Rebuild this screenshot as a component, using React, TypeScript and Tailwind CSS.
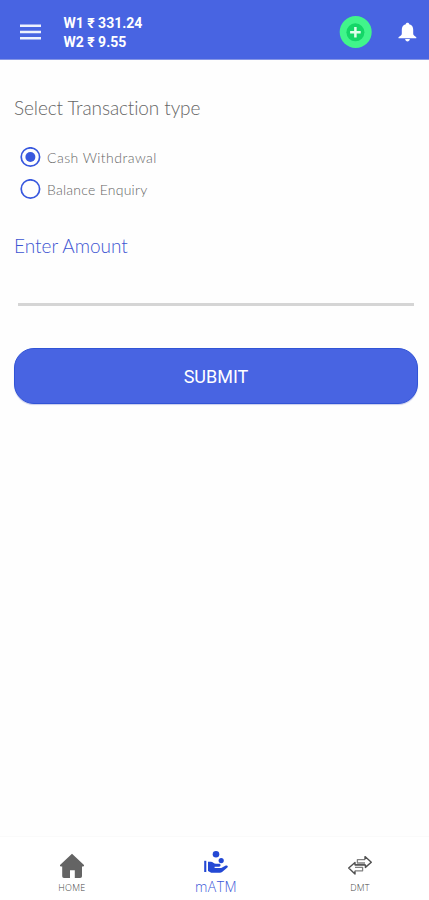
import React, { useState } from 'react';

interface RadioOptionProps {
  label: string;
  checked: boolean;
  onSelect: () => void;
  labelClassName: string;
}

const RadioOption: React.FC<RadioOptionProps> = ({ label, checked, onSelect, labelClassName }) => (
  <button
    type="button"
    role="radio"
    aria-checked={checked}
    onClick={onSelect}
    className="flex h-8 items-center gap-1.5"
  >
    <svg width="21" height="21" viewBox="0 0 21 21" fill="none">
      <circle cx="10.4" cy="10" r="9.2" stroke="#3858de" strokeWidth="1.7" />
      {checked && <circle cx="10.4" cy="10" r="5" fill="#3858de" />}
    </svg>
    <span className={`pt-px text-[14px] leading-none font-light whitespace-nowrap text-[#666] ${labelClassName}`}>{label}</span>
  </button>
);

const MenuIcon = () => (
  <svg width="21" height="16" viewBox="0 0 21 16" stroke="#edf0fd" strokeWidth="2.4">
    <path d="M0 1.8 H21 M0 8 H21 M0 14.2 H21" />
  </svg>
);

const HomeIcon = () => (
  <svg width="26" height="26" viewBox="0 0 26 26" fill="#646464">
    <path d="M13 0.8 L25 12 Q25.4 13.2 24.1 13.4 H23 V23.2 Q23 25 21.2 25 H15.8 V17.2 H11 V25 H5 Q3.2 25 3.2 23.2 V13.4 H1.9 Q0.6 13.2 1 12 Z" />
  </svg>
);

const CashInHandIcon = () => (
  <svg width="26" height="26" viewBox="0 0 26 26" fill="#2348d4">
    <circle cx="13" cy="4.2" r="3.3" />
    <circle cx="18.2" cy="10.6" r="2.6" />
    <path d="M1.2 10.8 H3.3 V22 H1.2 Z" />
    <path d="M5 11.8 H7.8 C9.8 11.8 10.8 13.8 13 13.8 H16.2 C18 13.8 18 16.6 16.2 16.8 H11.6 V18 H18.2 L22.8 15.6 C24.3 14.9 25.5 16.2 24.4 17.4 L19.4 21.7 C18.5 22.5 17.4 22.8 16.4 22.8 H8.2 L5 21 Z" />
  </svg>
);

const TransferIcon = () => (
  <svg width="26" height="22" viewBox="0 0 26 22" fill="none" strokeLinejoin="round">
    <path d="M18 4.6 H10.4 V8 H18" stroke="#808080" strokeWidth="1.3" />
    <path d="M18 4.6 V1.6 L24.3 7.2 L18.4 12.4 V9.9 H8" stroke="#505050" strokeWidth="1.4" />
    <path d="M18 9.9 H8 V7.4 L1.7 13 L8 19 V15.8" stroke="#505050" strokeWidth="1.4" />
    <path d="M8 12.3 H15.6 V15.8 H8" stroke="#808080" strokeWidth="1.3" />
  </svg>
);

const Header = () => (
  <header className="flex h-[60px] shrink-0 items-center border-b border-[#8696e5] bg-[#4864e2] pt-[5px] pr-3 pl-5 text-white">
    <button type="button" aria-label="Menu">
      <MenuIcon />
    </button>
    <div className="ml-[22.5px] flex-1 pt-[2px] text-[14px] leading-[19px] font-bold">
      <p className="whitespace-nowrap">W1 ₹ 331.24</p>
      <p className="whitespace-nowrap">W2 ₹ 9.55</p>
    </div>
    <button type="button" aria-label="Add money" className="mr-[25px]">
      <svg width="33" height="33" viewBox="0 0 33 33">
        <circle cx="16.7" cy="16" r="16" fill="#41f58b" />
        <circle cx="16.4" cy="16.3" r="9" fill="#14d667" />
        <path d="M16.4 11 V21.6 M11.1 16.3 H21.7" stroke="#e0ffec" strokeWidth="2.5" />
      </svg>
    </button>
    <button type="button" aria-label="Notifications">
      <svg width="20" height="21" viewBox="0 0 20 21" fill="white">
        <path d="M10.5 0.7 C11.5 0.7 12.2 1.2 12.2 2.2 C15.2 2.9 16.2 5 16.2 7.8 V11.5 C16.2 13.3 17.5 13.7 19.3 15.2 V16.2 H1.5 V15.2 C3.5 13.7 4.8 13.3 4.8 11.5 V7.8 C4.8 5 5.9 2.9 8.8 2.2 C8.8 1.2 9.5 0.7 10.5 0.7 Z" />
        <path d="M8.2 16.9 H12.8 C12.8 20.2 8.2 20.2 8.2 16.9 Z" />
      </svg>
    </button>
  </header>
);

const BottomNav = () => (
  <nav className="grid h-[64px] shrink-0 grid-cols-[144px_144px_144px] border-t border-[#fafafa] bg-white font-['Open_Sans',sans-serif]">
    <a className="flex flex-col items-center pt-[16px]">
      <HomeIcon />
      <span className="mt-[4px] text-[9px] leading-[10px] font-light tracking-[0.3px] text-[#444]">HOME</span>
    </a>
    <a className="flex flex-col items-center pt-[13px]">
      <CashInHandIcon />
      <span className="mt-[4px] text-[14px] leading-[14px] font-light tracking-[0.4px] text-[#3858d8]">mATM</span>
    </a>
    <a className="flex flex-col items-center pt-[18px]">
      <TransferIcon />
      <span className="mt-[6px] text-[9px] leading-[10px] font-light tracking-[0.3px] text-[#444]">DMT</span>
    </a>
  </nav>
);

const App: React.FC = () => {
  const [transactionType, setTransactionType] = useState('withdrawal');
  const [amount, setAmount] = useState('');

  return (
    <div className="flex h-screen flex-col overflow-hidden bg-[#fefefe] font-['Roboto',sans-serif]">
      <Header />
      <main className="flex flex-1 flex-col pt-[36px] pr-[11px] pl-[14px] font-['Lato',sans-serif] [font-variant-ligatures:none]">
        <h1 className="text-[19px] leading-6 font-light tracking-[-0.1px] text-[#666]">Select Transaction type</h1>
        <div role="radiogroup" className="mt-[21px] ml-[6px]">
          <RadioOption
            label="Cash Withdrawal"
            checked={transactionType === 'withdrawal'}
            onSelect={() => setTransactionType('withdrawal')}
            labelClassName="tracking-[0.45px]"
          />
          <RadioOption
            label="Balance Enquiry"
            checked={transactionType === 'balance'}
            onSelect={() => setTransactionType('balance')}
            labelClassName="tracking-[0.25px]"
          />
        </div>
        <label htmlFor="amount" className="mt-[29px] text-[19px] leading-6 font-light text-[#3d55d2]">
          Enter Amount
        </label>
        <input
          id="amount"
          type="text"
          inputMode="decimal"
          value={amount}
          onChange={(e) => setAmount(e.target.value)}
          className="mx-1 mt-[6px] h-[42px] border-b-[3px] border-[#d5d5d5] px-1 text-[18px] text-[#5067d8] outline-none"
        />
        <button
          type="button"
          className="mt-[42px] h-[56px] rounded-[20px] border border-[#3154d6] bg-[#4864e2] font-['Roboto',sans-serif] text-[18px] text-white shadow-[0_1px_1px_#c8cced]"
        >
          SUBMIT
        </button>
      </main>
      <BottomNav />
    </div>
  );
};

export default App;
